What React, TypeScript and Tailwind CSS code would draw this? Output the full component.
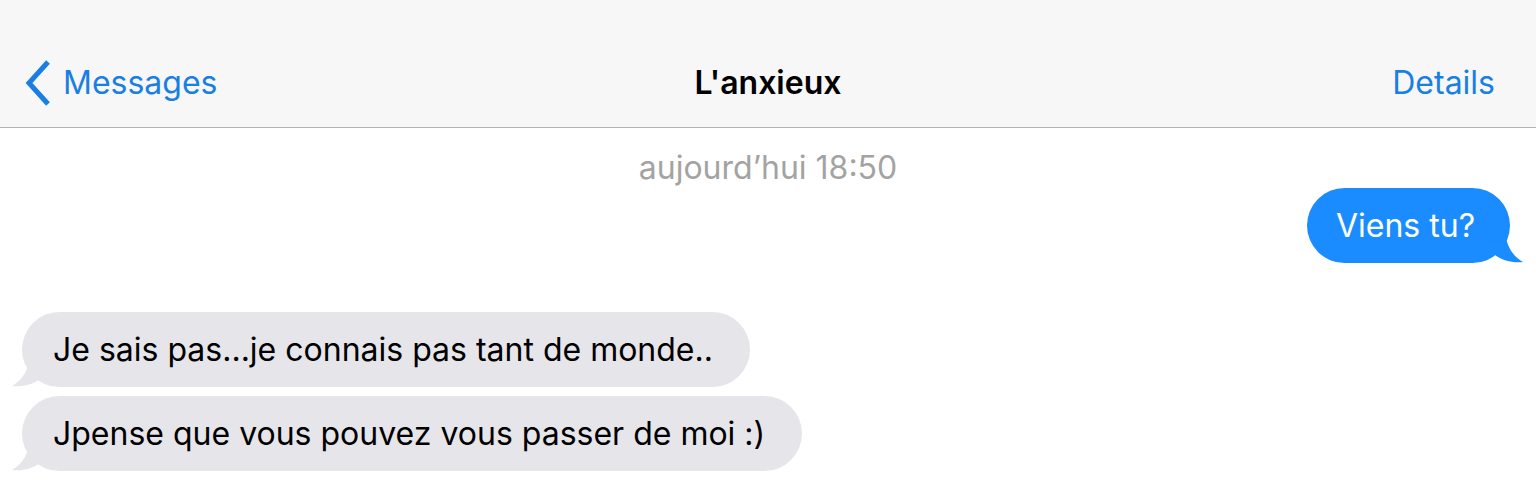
import React from "react";

const font = { fontFamily: 'Inter, "Liberation Sans", Arial, sans-serif' };

const Chevron = () => (
  <svg width="28" height="46" viewBox="0 0 28 46" className="shrink-0">
    <path d="M24 2 L5 23 L24 44" fill="none" stroke="#1a7fe3" strokeWidth="5" />
  </svg>
);

const SentBubble = ({ text }: { text: string }) => (
  <div className="relative mr-[26px] self-end">
    <div className="relative z-10 flex h-[75px] items-center rounded-[38px] bg-[#1a8cff] pl-[29px] pr-[35px] text-[32px] text-white">
      {text}
    </div>
    <svg width="34" height="30" viewBox="0 0 34 30" className="absolute -right-[13px] bottom-0">
      <path d="M0 0 L16 0 C18 12 22 22 34 29 C24 30 14 28 6 22 Z" fill="#1a8cff" />
    </svg>
  </div>
);

const ReceivedBubble = ({ text }: { text: string }) => (
  <div className="relative ml-[22px] self-start">
    <div className="relative z-10 flex h-[75px] items-center rounded-[38px] bg-[#e5e5ea] pl-[31px] pr-[37px] text-[32px] text-black">
      {text}
    </div>
    <svg width="34" height="30" viewBox="0 0 34 30" className="absolute -left-[10px] bottom-0">
      <path d="M34 0 L18 0 C16 12 12 22 0 29 C10 30 20 28 28 22 Z" fill="#e5e5ea" />
    </svg>
  </div>
);

export default function App() {
  return (
    <div className="flex h-[501px] w-[1536px] flex-col overflow-hidden bg-white" style={font}>
      <div className="border-b border-[#b2b2b2] bg-[#f7f7f7] pt-[40px]">
        <div className="relative flex h-[87px] items-center justify-between px-[24px] pb-[2px]">
          <div className="flex items-center gap-[11px] text-[32px] text-[#1a7fe3]">
            <Chevron />
            <span>Messages</span>
          </div>
          <div className="absolute left-1/2 -translate-x-1/2 text-[32px] font-semibold text-black">L'anxieux</div>
          <div className="pr-[17px] text-[32px] text-[#1a7fe3]">Details</div>
        </div>
      </div>
      <div className="flex flex-col">
        <div className="mt-[23px] text-center text-[32px] leading-[34px] text-[#a3a3a3]">aujourd’hui 18:50</div>
        <div className="mt-[3px] flex flex-col">
          <SentBubble text="Viens tu?" />
        </div>
        <div className="mt-[49px] flex flex-col gap-[9px]">
          <ReceivedBubble text="Je sais pas...je connais pas tant de monde.." />
          <ReceivedBubble text="Jpense que vous pouvez vous passer de moi :)" />
        </div>
      </div>
    </div>
  );
}
